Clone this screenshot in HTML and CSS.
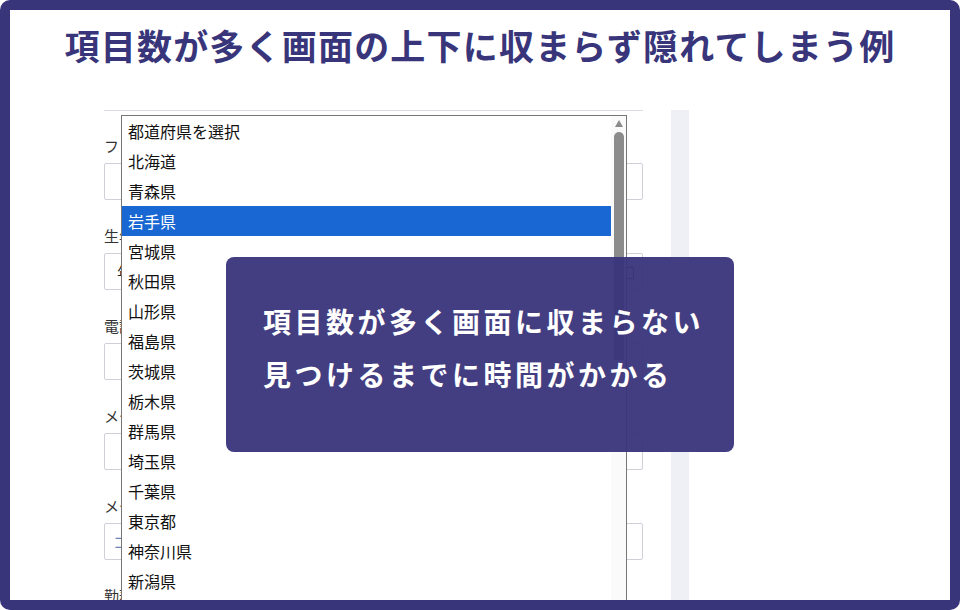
FILE: index.html
```html
<!DOCTYPE html>
<html lang="ja">
<head>
<meta charset="utf-8">
<title>項目数が多く画面の上下に収まらず隠れてしまう例</title>
<link rel="stylesheet" href="styles.css">
</head>
<body>
<div class="frame">
  <h1 class="title">項目数が多く画面の上下に収まらず隠れてしまう例</h1>
  <div class="content">
    <div class="form">
      <div class="field">
        <div class="label">フリガナ</div>
        <div class="input"></div>
      </div>
      <div class="field">
        <div class="label">生年月日</div>
        <div class="input date">
          <span class="date-text">年 / 月 / 日</span>
          <svg class="cal" width="8" height="14" viewBox="0 0 8 14"><rect x="0.5" y="2.5" width="7" height="11" fill="none" stroke="#555" stroke-width="1"/><line x1="2" y1="0.5" x2="2" y2="3" stroke="#555"/><line x1="6" y1="0.5" x2="6" y2="3" stroke="#555"/></svg>
        </div>
      </div>
      <div class="field">
        <div class="label">電話番号</div>
        <div class="input"></div>
      </div>
      <div class="field">
        <div class="label">メールアドレス</div>
        <div class="input"></div>
      </div>
      <div class="field">
        <div class="label">メールアドレス（確認用）</div>
        <div class="input"><span class="ph">コピーせずに入力してください</span></div>
      </div>
      <div class="field">
        <div class="label">勤務先</div>
        <div class="input"></div>
      </div>

      <div class="dropdown">
        <ul class="options">
          <li>都道府県を選択</li>
          <li>北海道</li>
          <li>青森県</li>
          <li class="selected">岩手県</li>
          <li>宮城県</li>
          <li>秋田県</li>
          <li>山形県</li>
          <li>福島県</li>
          <li>茨城県</li>
          <li>栃木県</li>
          <li>群馬県</li>
          <li>埼玉県</li>
          <li>千葉県</li>
          <li>東京都</li>
          <li>神奈川県</li>
          <li>新潟県</li>
          <li>富山県</li>
        </ul>
        <div class="scrollbar">
          <div class="arrow"></div>
          <div class="thumb"></div>
        </div>
      </div>
    </div>
    <div class="sidebar"></div>
  </div>

  <div class="overlay">
    <p>項目数が多く画面に収まらない</p>
    <p>見つけるまでに時間がかかる</p>
  </div>
</div>
</body>
</html>
```

FILE: styles.css
```css
html, body {
  margin: 0;
  padding: 0;
  background: #ffffff;
}
body {
  font-family: "Noto Sans CJK JP", "Noto Sans", sans-serif;
}
.frame {
  position: relative;
  width: 960px;
  height: 610px;
  box-sizing: border-box;
  border: 10px solid #38357a;
  border-radius: 10px;
  background: #ffffff;
  overflow: hidden;
}
.title {
  margin: 0;
  padding-top: 10px;
  height: 50px;
  line-height: 50px;
  text-align: center;
  font-size: 35px;
  font-weight: 700;
  letter-spacing: 1.2px;
  color: #38357a;
}
.content {
  margin-top: 40px;
  display: flex;
  gap: 28px;
  padding-left: 94px;
  height: 490px;
}
.form {
  position: relative;
  width: 539px;
  border-top: 1px solid #dcdce3;
  padding-top: 26px;
  box-sizing: border-box;
}
.field {
  height: 90px;
}
.label {
  height: 18px;
  line-height: 18px;
  font-size: 15px;
  color: #333;
  white-space: nowrap;
}
.input {
  margin-top: 8px;
  height: 37px;
  box-sizing: border-box;
  border: 1px solid #cfd0d8;
  border-radius: 2px;
  display: flex;
  align-items: center;
  padding: 0 8px;
  font-size: 15px;
}
.date {
  justify-content: space-between;
  padding-left: 12px;
}
.date-text {
  color: #222;
}
.cal {
  display: block;
}
.ph {
  color: #6b86b8;
}
.sidebar {
  width: 18px;
  background: #eff0f5;
}
.dropdown {
  position: absolute;
  left: 17px;
  top: 4px;
  width: 506px;
  height: 520px;
  box-sizing: border-box;
  border: 1px solid #767676;
  background: #ffffff;
  display: flex;
}
.options {
  list-style: none;
  margin: 0;
  padding: 0;
  flex: 1;
}
.options li {
  height: 30px;
  line-height: 30px;
  padding-left: 6px;
  font-size: 16px;
  color: #111;
}
.options li.selected {
  background: #1967d2;
  color: #ffffff;
}
.scrollbar {
  width: 15px;
  background: #fafafa;
  display: flex;
  flex-direction: column;
  align-items: center;
}
.arrow {
  margin-top: 4px;
  width: 0;
  height: 0;
  border-left: 4px solid transparent;
  border-right: 4px solid transparent;
  border-bottom: 7px solid #8a8a8a;
}
.thumb {
  margin-top: 5px;
  width: 10px;
  height: 228px;
  border-radius: 5px 5px 0 0;
  background: #8b8b8b;
}
.overlay {
  position: absolute;
  left: 216px;
  top: 247px;
  width: 508px;
  height: 195px;
  box-sizing: border-box;
  padding: 38px 0 0 37px;
  border-radius: 8px;
  background: rgba(56, 52, 122, 0.95);
}
.overlay p {
  margin: 0;
  height: 53px;
  line-height: 53px;
  font-size: 28px;
  font-weight: 700;
  letter-spacing: 3.5px;
  color: #ffffff;
  white-space: nowrap;
}
```
